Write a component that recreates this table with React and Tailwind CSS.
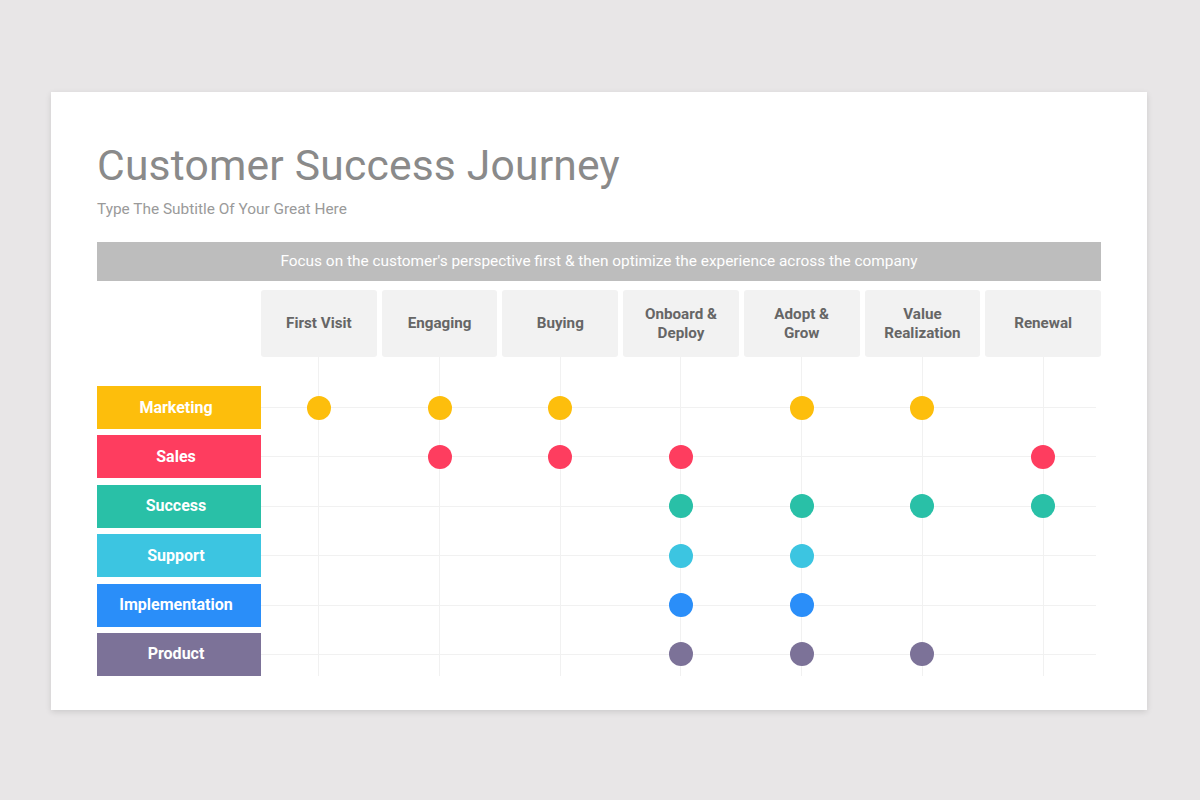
const stages = [
  ["First Visit"],
  ["Engaging"],
  ["Buying"],
  ["Onboard &", "Deploy"],
  ["Adopt &", "Grow"],
  ["Value", "Realization"],
  ["Renewal"],
];

const teams = [
  { name: "Marketing", bg: "bg-[#fdbe0c]", dot: "bg-[#fdbe0c]", cols: [0, 1, 2, 4, 5] },
  { name: "Sales", bg: "bg-[#fe3d5f]", dot: "bg-[#fe3d5f]", cols: [1, 2, 3, 6] },
  { name: "Success", bg: "bg-[#29c0a7]", dot: "bg-[#29c0a7]", cols: [3, 4, 5, 6] },
  { name: "Support", bg: "bg-[#3cc5e1]", dot: "bg-[#3cc5e1]", cols: [3, 4] },
  { name: "Implementation", bg: "bg-[#2a8ef9]", dot: "bg-[#2a8ef9]", cols: [3, 4] },
  { name: "Product", bg: "bg-[#7c7298]", dot: "bg-[#7c7298]", cols: [3, 4, 5] },
];

const App = () => {
  return (
    <div className="h-screen w-full bg-[#e8e6e7] pl-[51px] pt-[92px] font-['Roboto',sans-serif]">
      <div className="w-[1096px] h-[618px] bg-white shadow-[0_2px_6px_rgba(0,0,0,0.12)] px-[46px] pt-[45px]">
        <h1 className="text-[42.6px] leading-[56px] text-[#8a8a8a] font-normal tracking-[0.2px]">
          Customer Success Journey
        </h1>
        <p className="mt-[6px] text-[15.4px] leading-[20px] text-[#9a9a9a]">Type The Subtitle Of Your Great Here</p>

        <div className="mt-[23px] h-[39px] bg-[#bdbdbd] flex items-center justify-center text-white text-[15.4px]">
          Focus on the customer's perspective first &amp; then optimize the experience across the company
        </div>

        {/* stage headers */}
        <div className="mt-[9px] flex">
          <div className="w-[164px] shrink-0" />
          <div className="flex-1 grid grid-cols-7 gap-[5px]">
            {stages.map((lines) => (
              <div
                key={lines.join(" ")}
                className="h-[67px] rounded-[3px] bg-[#f2f2f2] flex flex-col items-center justify-center text-[15.2px] leading-[19px] font-bold text-[#666666]"
              >
                {lines.map((l) => (
                  <span key={l}>{l}</span>
                ))}
              </div>
            ))}
          </div>
        </div>

        {/* body */}
        <div className="relative pt-[29px] flex flex-col gap-[6.4px]">
          <div className="absolute top-0 bottom-0 left-[164px] right-0 grid grid-cols-7 gap-[5px]">
            {stages.map((lines) => (
              <div key={lines.join(" ")} className="flex justify-center">
                <div className="w-px h-full bg-[#f1f1f1]" />
              </div>
            ))}
          </div>
          {teams.map((t) => (
            <div key={t.name} className="relative flex h-[43px]">
              <div
                className={`w-[164px] shrink-0 ${t.bg} flex items-center justify-center pr-[6px] text-white font-bold text-[16px]`}
              >
                {t.name}
              </div>
              <div className="flex-1 grid grid-cols-7 gap-[5px] bg-no-repeat bg-[length:calc(100%-5px)_100%] bg-[linear-gradient(to_bottom,transparent_21px,#f1f1f1_21px,#f1f1f1_22px,transparent_22px)]">
                {stages.map((lines, i) => (
                  <div key={lines.join(" ")} className="flex items-center justify-center">
                    {t.cols.includes(i) && <div className={`w-[24px] h-[24px] rounded-full ${t.dot}`} />}
                  </div>
                ))}
              </div>
            </div>
          ))}
        </div>
      </div>
    </div>
  );
};

export default App;
